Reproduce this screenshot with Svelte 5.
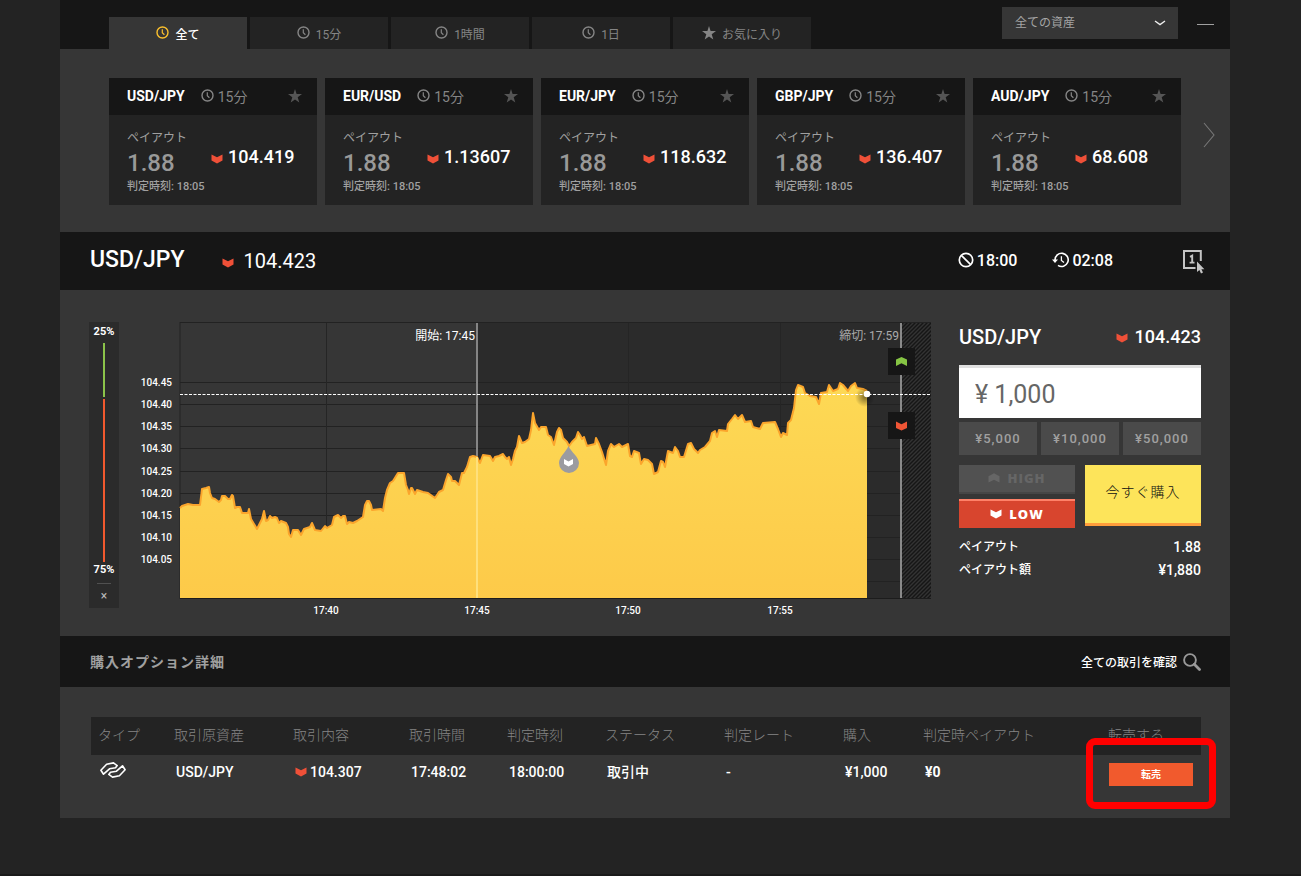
<script>
  const tabs = [
    { label: '全て', icon: 'clock', active: true },
    { label: '15分', icon: 'clock' },
    { label: '1時間', icon: 'clock' },
    { label: '1日', icon: 'clock' },
    { label: 'お気に入り', icon: 'star' }
  ];

  const cards = [
    { pair: 'USD/JPY', rate: '104.419' },
    { pair: 'EUR/USD', rate: '1.13607' },
    { pair: 'EUR/JPY', rate: '118.632' },
    { pair: 'GBP/JPY', rate: '136.407' },
    { pair: 'AUD/JPY', rate: '68.608' }
  ];

  const presets = ['¥5,000', '¥10,000', '¥50,000'];

  // Rate history in plot units: x from the left edge, y down from the top edge.
  const line =
    '0,186 2,184 8,182 13,183 20,183 22,167 26,166 29,165 30,171 32,176 35,177 39,180 41,178 42,174 45,174 48,177 50,177 52,173 53,174 55,186 57,185 60,185 62,191 68,191 69,187 71,197 77,207 82,197 84,189 86,199 88,198 90,194 92,196 95,195 97,196 99,201 101,199 106,201 108,205 109,212 111,215 113,208 118,208 121,213 124,207 130,205 132,201 135,208 141,209 145,204 147,206 152,203 154,195 158,193 161,196 163,194 165,194 167,202 169,200 173,201 177,199 183,195 185,183 187,179 189,179 191,183 192,188 201,187 203,189 205,176 207,168 210,161 213,159 218,151 224,151 226,163 228,168 229,172 231,166 232,166 235,172 237,168 243,170 248,171 255,176 259,170 263,168 266,158 268,152 271,155 272,159 275,159 279,163 282,151 284,151 287,145 290,135 293,134 297,135 300,141 303,133 310,134 313,139 315,135 319,134 323,132 325,135 327,137 329,135 331,143 333,137 335,129 337,125 339,114 342,121 345,120 349,117 351,108 353,91 355,101 359,108 361,105 366,105 368,113 371,115 374,123 377,110 379,106 381,108 383,116 387,120 389,124 392,120 396,116 398,110 400,113 402,117 404,115 407,124 415,122 416,116 419,122 422,130 426,143 428,129 431,122 434,125 439,122 442,125 448,122 450,134 452,135 454,129 459,131 461,142 464,137 468,138 472,142 474,152 478,150 481,139 483,140 485,145 488,129 493,131 495,125 498,129 500,135 504,135 508,122 511,121 514,127 518,131 520,128 525,125 530,119 532,111 535,109 537,115 539,108 547,109 548,102 552,97 555,93 558,97 562,93 565,100 571,99 573,105 580,107 583,101 595,100 598,107 601,115 603,111 607,113 608,101 611,98 614,86 616,68 618,63 623,65 625,71 630,74 636,75 639,82 641,71 647,70 649,63 653,69 658,67 660,61 663,63 668,69 671,64 675,61 677,66 683,67 687,69';

  const yLabels = ['104.45', '104.40', '104.35', '104.30', '104.25', '104.20', '104.15', '104.10', '104.05'];
  const rows = [61, 83, 105, 127, 150, 172, 194, 216, 238, 260];
  const xLabels = [
    { t: '17:40', x: 146 },
    { t: '17:45', x: 297 },
    { t: '17:50', x: 448 },
    { t: '17:55', x: 600 }
  ];

  const columns = [
    { name: 'タイプ', w: 76 },
    { name: '取引原資産', w: 119 },
    { name: '取引内容', w: 116 },
    { name: '取引時間', w: 98 },
    { name: '判定時刻', w: 98 },
    { name: 'ステータス', w: 119 },
    { name: '判定レート', w: 119 },
    { name: '購入', w: 80 },
    { name: '判定時ペイアウト', w: 185 },
    { name: '転売する', w: 100 }
  ];
  const total = columns.reduce((sum, c) => sum + c.w, 0);

  let amount = $state('¥ 1,000');
</script>

{#snippet clock()}
  <svg class="clock" viewBox="0 0 13 13" aria-hidden="true">
    <circle cx="6.5" cy="6.5" r="5.500" fill="none" stroke="currentColor" stroke-width="1.400" />
    <path d="M6.300 3.200V6.800L8.400 8.800" fill="none" stroke="currentColor" stroke-width="1.200" />
  </svg>
{/snippet}

{#snippet star()}
  <svg class="star" viewBox="0 0 14 14" aria-hidden="true">
    <path d="M7 0L8.6 5.1H14L9.7 8.3L11.3 13.6L7 10.4L2.7 13.6L4.3 8.3L0 5.1H5.4Z" fill="currentColor" />
  </svg>
{/snippet}

{#snippet down()}
  <svg class="down" viewBox="0 0 12 10" aria-hidden="true">
    <path d="M0.5 0.5L6 3.2L11.5 0.5V6.6L6 9.6L0.5 6.6Z" fill="currentColor" />
  </svg>
{/snippet}

<div class="page">
  <header class="topbar">
    <nav class="tabs">
      {#each tabs as tab}
        <button class="tab" class:active={tab.active}>
          {#if tab.icon === 'clock'}{@render clock()}{:else}{@render star()}{/if}
          <span>{tab.label}</span>
        </button>
      {/each}
    </nav>
    <div class="filter">
      <select aria-label="資産">
        <option>全ての資産</option>
      </select>
      <svg viewBox="0 0 12 6" aria-hidden="true"><path d="M1 1L6 4.600L11 1" fill="none" stroke="#eee" stroke-width="1.400" /></svg>
    </div>
    <button class="minimize" aria-label="最小化"><i></i></button>
  </header>

  <section class="assets">
    <div class="cards">
      {#each cards as card}
        <article class="card">
          <header>
            <strong>{card.pair}</strong>
            {@render clock()}
            <span class="term">15分</span>
            <button class="fav" aria-label="お気に入り">{@render star()}</button>
          </header>
          <div class="card-body">
            <div class="label">ペイアウト</div>
            <div class="values">
              <span class="payout">1.88</span>
              <span class="rate">{@render down()}{card.rate}</span>
            </div>
            <div class="expiry">判定時刻: 18:05</div>
          </div>
        </article>
      {/each}
    </div>
    <button class="next" aria-label="次へ">
      <svg viewBox="0 0 12 26"><path d="M1 1L11 13L1 25" fill="none" stroke="currentColor" stroke-width="1.1" /></svg>
    </button>
  </section>

  <section class="titlebar">
    <h1>USD/JPY</h1>
    <span class="quote">{@render down()}104.423</span>
    <span class="time">
      <svg viewBox="0 0 16 16" aria-hidden="true"><g fill="none" stroke="#fff" stroke-width="1.7"><circle cx="8" cy="8" r="6.7" /><path d="M3.3 3.3L12.7 12.7" /></g></svg>18:00
    </span>
    <span class="time left">
      <svg viewBox="0 0 17 16" aria-hidden="true"><path d="M3 8A6.6 6.6 0 1 1 6 13.4" fill="none" stroke="#fff" stroke-width="1.6" /><path d="M0 7.4H6L3 11Z" fill="#fff" /><path d="M9.4 4.2V8.4L12 10.4" fill="none" stroke="#fff" stroke-width="1.3" /></svg>02:08
    </span>
    <button class="oneclick" aria-label="ワンクリック">
      <svg viewBox="0 0 22 24">
        <path d="M12.5 18H1V1H17.8V11" fill="none" stroke="#c4c4c4" stroke-width="2" />
        <path d="M7 6.8L9.200 5.600V13M6.600 12.600H11.500" fill="none" stroke="#c4c4c4" stroke-width="1.900" />
        <path d="M14 11.5V22L16.4 19.9L18 23.4L20 22.5L18.4 19.2H21.4Z" fill="#c4c4c4" />
      </svg>
    </button>
  </section>

  <section class="trade">
    <div class="gauge">
      <span>25%</span>
      <i class="high"></i>
      <i class="low"></i>
      <span>75%</span>
      <button aria-label="閉じる">×</button>
    </div>

    <svg class="chart" viewBox="0 0 799 300" role="img" aria-label="USD/JPY">
      <defs>
        <linearGradient id="fill" x1="0" y1="0" x2="0" y2="1">
          <stop offset="0" stop-color="#fdd955" />
          <stop offset="1" stop-color="#fdca49" />
        </linearGradient>
        <radialGradient id="shade">
          <stop offset="0" stop-color="#000" stop-opacity="0.5" />
          <stop offset="1" stop-color="#000" stop-opacity="0" />
        </radialGradient>
        <pattern id="hatch" width="4" height="4" patternUnits="userSpaceOnUse">
          <rect width="4" height="4" fill="#333" />
          <path d="M-1 1L1 -1M0 4L4 0M3 5L5 3" stroke="#161616" stroke-width="1.500" />
        </pattern>
      </defs>

      {#each yLabels as label, i}
        <text class="axis" x="40" y={rows[i] + 3} text-anchor="end">{label}</text>
      {/each}

      <g transform="translate(48 0)">
        <rect x="297" width="425" height="277" fill="#2b2b2b" />
        {#each rows as y}
          <path d="M0 {y - 0.5}H722" stroke="#222" />
        {/each}
        {#each xLabels as mark}
          <path d="M{mark.x + 0.5} 0V277" stroke="#252525" />
          <text class="axis" x={mark.x} y="292" text-anchor="middle">{mark.t}</text>
        {/each}
        <rect x="722" width="29" height="277" fill="url(#hatch)" />
        <path d="M0 0.5H751M0 0V277" stroke="#222" fill="none" />
        <polygon points="0,276 {line} 687,276" fill="url(#fill)" />
        <polyline points={line} fill="none" stroke="#fba52c" stroke-width="2" stroke-linejoin="round" />
        <path d="M0 276.5H751" stroke="#1c1c1c" />
        <path d="M297 1V134" stroke="#858585" stroke-width="2" />
        <path d="M297 135V276" stroke="#fee07c" stroke-width="2" />
        <path d="M721 1V276" stroke="#8a8a8a" stroke-width="2" />
        <circle cx="685" cy="75" r="10" fill="url(#shade)" />
        <path d="M0 72.5H751" stroke="#fff" stroke-dasharray="3 1.5" />
        <circle cx="687" cy="72" r="3.3" fill="#fff" />
        <text class="mark" x="295" y="18" text-anchor="end">開始: 17:45</text>
        <text class="mark end" x="719" y="18" text-anchor="end">締切: 17:59</text>
        <rect x="708" y="26" width="27" height="27" fill="#161616" />
        <path d="M716 37.5L721.5 35L727 37.5V44L721.5 41.3L716 44Z" fill="#86c544" />
        <rect x="708" y="90" width="27" height="27" fill="#161616" />
        <path d="M716 99.5L721.5 102.2L727 99.5V106L721.5 108.6L716 106Z" fill="#ef5535" />
        <path d="M388.500 124C386 130 379 135 379 141A10 10 0 0 0 399 141C399 135 391 130 388.500 124Z" fill="#9b9ba0" />
        <path d="M384 137L388.500 139.500L393 137V142L388.500 144.500L384 142Z" fill="#fff" />
      </g>
    </svg>

    <form class="order" onsubmit={(e) => e.preventDefault()}>
      <div class="order-head">
        <h2>USD/JPY</h2>
        <span class="quote">{@render down()}104.423</span>
      </div>
      <input class="amount" type="text" aria-label="購入金額" bind:value={amount} />
      <div class="presets">
        {#each presets as p}
          <button type="button">{p}</button>
        {/each}
      </div>
      <div class="actions">
        <div class="sides">
          <button type="button" class="side up">
            <svg viewBox="0 0 12 10" aria-hidden="true"><path d="M0.500 3.200L6 0.300L11.500 3.200V9.500L6 6.800L0.500 9.500Z" fill="currentColor" /></svg>HIGH
          </button>
          <button type="button" class="side dn">{@render down()}LOW</button>
        </div>
        <button class="buy">今すぐ購入</button>
      </div>
      <dl>
        <div><dt>ペイアウト</dt><dd>1.88</dd></div>
        <div><dt>ペイアウト額</dt><dd>¥1,880</dd></div>
      </dl>
    </form>
  </section>

  <section class="listbar">
    <h2>購入オプション詳細</h2>
    <a href="#history">
      全ての取引を確認
      <svg viewBox="0 0 18 18" aria-hidden="true"><circle cx="7" cy="7" r="5.900" fill="none" stroke="#999" stroke-width="1.900" /><path d="M11.300 11.300L16.500 16.500" stroke="#999" stroke-width="2.800" stroke-linecap="round" /></svg>
    </a>
  </section>

  <section class="history" id="history">
    <table>
      <colgroup>
        {#each columns as c}
          <col style="width: {(c.w / total) * 100}%" />
        {/each}
      </colgroup>
      <thead>
        <tr>
          {#each columns as c}<th>{c.name}</th>{/each}
        </tr>
      </thead>
      <tbody>
        <tr>
          <td>
            <svg class="type" viewBox="0 0 26 16" role="img" aria-label="HighLow">
              <g fill="none" stroke="#fff" stroke-width="1.600" stroke-linejoin="round">
                <path d="M3.500 12.200L0.900 8.200L6.600 2.200L13.500 0.900L17.200 3.600L15.500 5.800L9.500 6.800L3.500 12.200Z" />
                <path d="M22.500 3.800L25.100 7.800L19.400 13.800L12.500 15.100L8.800 12.400L10.500 10.200L16.500 9.200L22.500 3.800Z" />
              </g>
            </svg>
          </td>
          <td>USD/JPY</td>
          <td><span class="deal">{@render down()}104.307</span></td>
          <td>17:48:02</td>
          <td>18:00:00</td>
          <td>取引中</td>
          <td>-</td>
          <td>¥1,000</td>
          <td><b>¥0</b></td>
          <td>
            <div class="resell">
              <button>転売</button>
              <span class="highlight"></span>
            </div>
          </td>
        </tr>
      </tbody>
    </table>
  </section>
</div>

<style>
  :global(body) {
    background: #232323;
  }
  .page {
    box-sizing: border-box;
    min-height: 100vh;
    padding: 0 71px 0 60px;
    border-bottom: 2px solid #1a1a1a;
    color: #fff;
    font-family: Roboto, 'Noto Sans CJK JP', sans-serif;
    font-size: 14px;
  }
  button, input, select {
    font: inherit;
    color: inherit;
    border: 0;
    border-radius: 0;
    margin: 0;
    padding: 0;
    background: none;
  }
  button {
    cursor: pointer;
  }
  h1, h2, dl, dd {
    margin: 0;
    font-weight: 500;
  }
  svg {
    display: block;
    flex: none;
  }
  .clock {
    width: 13px;
    height: 13px;
  }
  .star {
    width: 14px;
    height: 14px;
  }
  .down {
    width: 12px;
    height: 10px;
    color: #ef5038;
  }

  .topbar {
    display: flex;
    align-items: flex-end;
    height: 49px;
    padding-left: 49px;
    background: #161616;
  }
  .tabs {
    display: flex;
    gap: 3px;
    flex: 1;
  }
  .tab {
    display: flex;
    align-items: center;
    justify-content: center;
    gap: 6px;
    width: 138px;
    height: 32px;
    background: #232323;
    color: #858585;
    font-size: 12px;
  }
  .tab .clock {
    margin-bottom: 2px;
  }
  .tab.active {
    background: #363636;
    color: #fff;
    font-weight: 500;
  }
  .tab.active .clock {
    color: #fbc02d;
  }
  .filter {
    display: grid;
    grid-template-columns: 1fr 24px;
    align-items: center;
    width: 176px;
    height: 32px;
    margin-bottom: 10px;
    background: #363636;
  }
  .filter select {
    grid-area: 1 / 1 / 2 / 3;
    height: 32px;
    padding-left: 13px;
    appearance: none;
    color: #a5a5a5;
    font-size: 12px;
  }
  .filter svg {
    grid-area: 1 / 2;
    width: 12px;
    height: 6px;
    pointer-events: none;
  }
  .minimize {
    display: grid;
    place-items: center;
    align-self: stretch;
    width: 52px;
    padding-left: 3px;
  }
  .minimize i {
    width: 17px;
    height: 1px;
    background: #a0a0a0;
  }

  .assets {
    display: flex;
    padding: 29px 0 27px 49px;
    background: #363636;
  }
  .cards {
    display: grid;
    grid-template-columns: repeat(5, 1fr);
    gap: 8px;
    flex: 1;
  }
  .card {
    background: #232323;
  }
  .card header {
    display: flex;
    align-items: center;
    height: 37px;
    padding: 0 15px 2px 18px;
    background: #161616;
    color: #858585;
    box-sizing: border-box;
  }
  .card strong {
    margin-right: 16px;
    color: #fff;
    font-weight: 700;
  }
  .card .term {
    margin-left: 4px;
  }
  .fav {
    margin-left: auto;
    color: #555;
  }
  .card-body {
    height: 90px;
    padding: 13px 0 0 18px;
    box-sizing: border-box;
  }
  .label {
    color: #a0a0a0;
    font-size: 12px;
    line-height: 20px;
  }
  .values {
    display: grid;
    grid-template-columns: 84px 1fr;
    line-height: 30px;
  }
  .payout {
    color: #999;
    font-size: 24px;
    font-weight: 500;
  }
  .rate {
    display: flex;
    align-items: center;
    gap: 5px;
    height: 18px;
    font-size: 18px;
    font-weight: 500;
  }
  .rate .down, .quote .down {
    margin-top: 4px;
  }
  .expiry {
    color: #a0a0a0;
    font-size: 11px;
    font-weight: 500;
    line-height: 18px;
  }
  .next {
    display: grid;
    place-items: center;
    width: 49px;
    padding: 0 0 13px 6px;
    color: #777;
  }
  .next svg {
    width: 12px;
    height: 26px;
  }

  .titlebar {
    display: flex;
    align-items: center;
    height: 58px;
    padding: 0 25px 0 30px;
    background: #161616;
  }
  h1 {
    font-size: 23px;
    line-height: 32px;
    padding-bottom: 2px;
  }
  .quote {
    display: flex;
    align-items: center;
    gap: 9px;
    font-size: 20px;
  }
  .titlebar .quote {
    margin: 0 auto 0 38px;
  }
  .time {
    display: flex;
    align-items: center;
    gap: 3px;
    padding-bottom: 2px;
    font-size: 16px;
    font-weight: 500;
  }
  .time svg {
    width: 16px;
    height: 16px;
  }
  .time.left {
    margin: 0 70px 0 35px;
  }
  .time.left svg {
    width: 17px;
  }
  .oneclick {
    padding-top: 2px;
  }
  .oneclick svg {
    width: 22px;
    height: 24px;
  }

  .trade {
    display: flex;
    align-items: flex-start;
    padding: 32px 29px 14px;
    background: #363636;
  }
  .gauge {
    display: flex;
    flex-direction: column;
    align-items: center;
    width: 30px;
    height: 286px;
    margin-right: 13px;
    background: #2b2b2b;
    font-size: 11px;
    font-weight: 700;
    line-height: 20px;
  }
  .gauge i {
    width: 2px;
  }
  .gauge .high {
    flex: 1;
    margin: 1px 0 2px;
    background: #8bc34a;
  }
  .gauge .low {
    flex: 3;
    background: #f1592e;
  }
  .gauge span:last-of-type {
    line-height: 16px;
  }
  .gauge button {
    width: 14px;
    margin-top: 5px;
    border-top: 1px solid #505050;
    color: #bbb;
    font-size: 12px;
    line-height: 24px;
    font-weight: 400;
  }
  .chart {
    flex: 1;
    min-width: 0;
    height: auto;
    margin-right: 28px;
  }
  .axis {
    fill: #fff;
    font-size: 10px;
    font-weight: 500;
  }
  .mark {
    fill: #fff;
    font-size: 12px;
  }
  .mark.end {
    fill: #aaa;
  }

  .order {
    width: 242px;
  }
  .order-head {
    display: flex;
    align-items: center;
    justify-content: space-between;
    height: 30px;
    margin-bottom: 13px;
  }
  .order-head h2 {
    font-size: 20px;
  }
  .order-head .quote {
    gap: 7px;
    padding-bottom: 2px;
    font-size: 18px;
    font-weight: 500;
  }
  .amount {
    display: block;
    box-sizing: border-box;
    width: 100%;
    height: 53px;
    padding: 3px 16px 0;
    border-top: 3px solid #e0e0e0;
    background: #fff;
    color: #666;
    font-size: 25px;
  }
  .presets {
    display: grid;
    grid-template-columns: repeat(3, 1fr);
    gap: 4px;
    margin: 4px 0 10px;
  }
  .presets button {
    height: 33px;
    background: #4a4a4a;
    color: #a0a0a0;
    font-size: 13px;
    font-weight: 500;
    letter-spacing: 1px;
  }
  .actions {
    display: grid;
    grid-template-columns: 1fr 1fr;
    align-items: start;
    gap: 10px;
  }
  .sides {
    display: grid;
    gap: 5px;
  }
  .side {
    display: flex;
    align-items: center;
    justify-content: center;
    gap: 7px;
    height: 29px;
    padding-bottom: 1px;
    box-sizing: border-box;
    font-family: 'Open Sans', sans-serif;
    font-size: 13px;
    font-weight: 800;
    letter-spacing: 1px;
  }
  .side svg {
    width: 12px;
    height: 10px;
    color: inherit;
  }
  .side.up {
    background: #515151;
    border-bottom: 2px solid #464646;
    color: #666;
  }
  .side.dn {
    background: #d8452e;
    border-top: 2px solid #ff8168;
  }
  .buy {
    height: 61px;
    box-sizing: border-box;
    padding-bottom: 6px;
    background: #fde45a;
    border-bottom: 3px solid #ff9d3b;
    color: #111;
    font-size: 14px;
    font-weight: 300;
    letter-spacing: 1px;
  }
  dl {
    margin-top: 8px;
    font-size: 12px;
    line-height: 23px;
  }
  dl div {
    display: flex;
    justify-content: space-between;
  }
  dt {
    font-weight: 500;
  }
  dd {
    font-size: 14px;
  }

  .listbar {
    display: flex;
    align-items: center;
    justify-content: space-between;
    height: 51px;
    padding: 0 29px 0 30px;
    background: #161616;
  }
  .listbar h2 {
    padding-bottom: 2px;
    color: #a0a0a0;
    font-size: 14px;
    font-weight: 700;
    letter-spacing: 1px;
  }
  .listbar a {
    display: flex;
    align-items: center;
    gap: 6px;
    color: #fff;
    font-size: 12px;
    font-weight: 500;
    text-decoration: none;
  }
  .listbar a svg {
    width: 18px;
    height: 18px;
  }

  .history {
    padding: 30px 29px 28px 31px;
    background: #363636;
  }
  table {
    width: 100%;
    table-layout: fixed;
    border-collapse: collapse;
    text-align: left;
  }
  th {
    height: 38px;
    padding: 0 0 2px 7px;
    box-sizing: border-box;
    background: #232323;
    color: #858585;
    font-weight: 300;
    line-height: 20px;
    white-space: nowrap;
  }
  td {
    height: 35px;
    padding: 7px 0 0 9px;
    box-sizing: border-box;
    vertical-align: top;
    font-weight: 500;
    line-height: 20px;
  }
  td:last-child {
    padding: 8px 8px 0;
  }
  .type {
    width: 26px;
    height: 16px;
  }
  .deal {
    display: flex;
    align-items: center;
    gap: 3px;
  }
  .resell {
    position: relative;
    height: 23px;
  }
  .resell button {
    display: block;
    width: 100%;
    height: 23px;
    background: #f15a2d;
    font-size: 10px;
    font-weight: 700;
  }
  .highlight {
    position: absolute;
    inset: -25px -23px -23px;
    border: 7px solid #f00;
    border-radius: 9px;
    pointer-events: none;
  }
</style>
